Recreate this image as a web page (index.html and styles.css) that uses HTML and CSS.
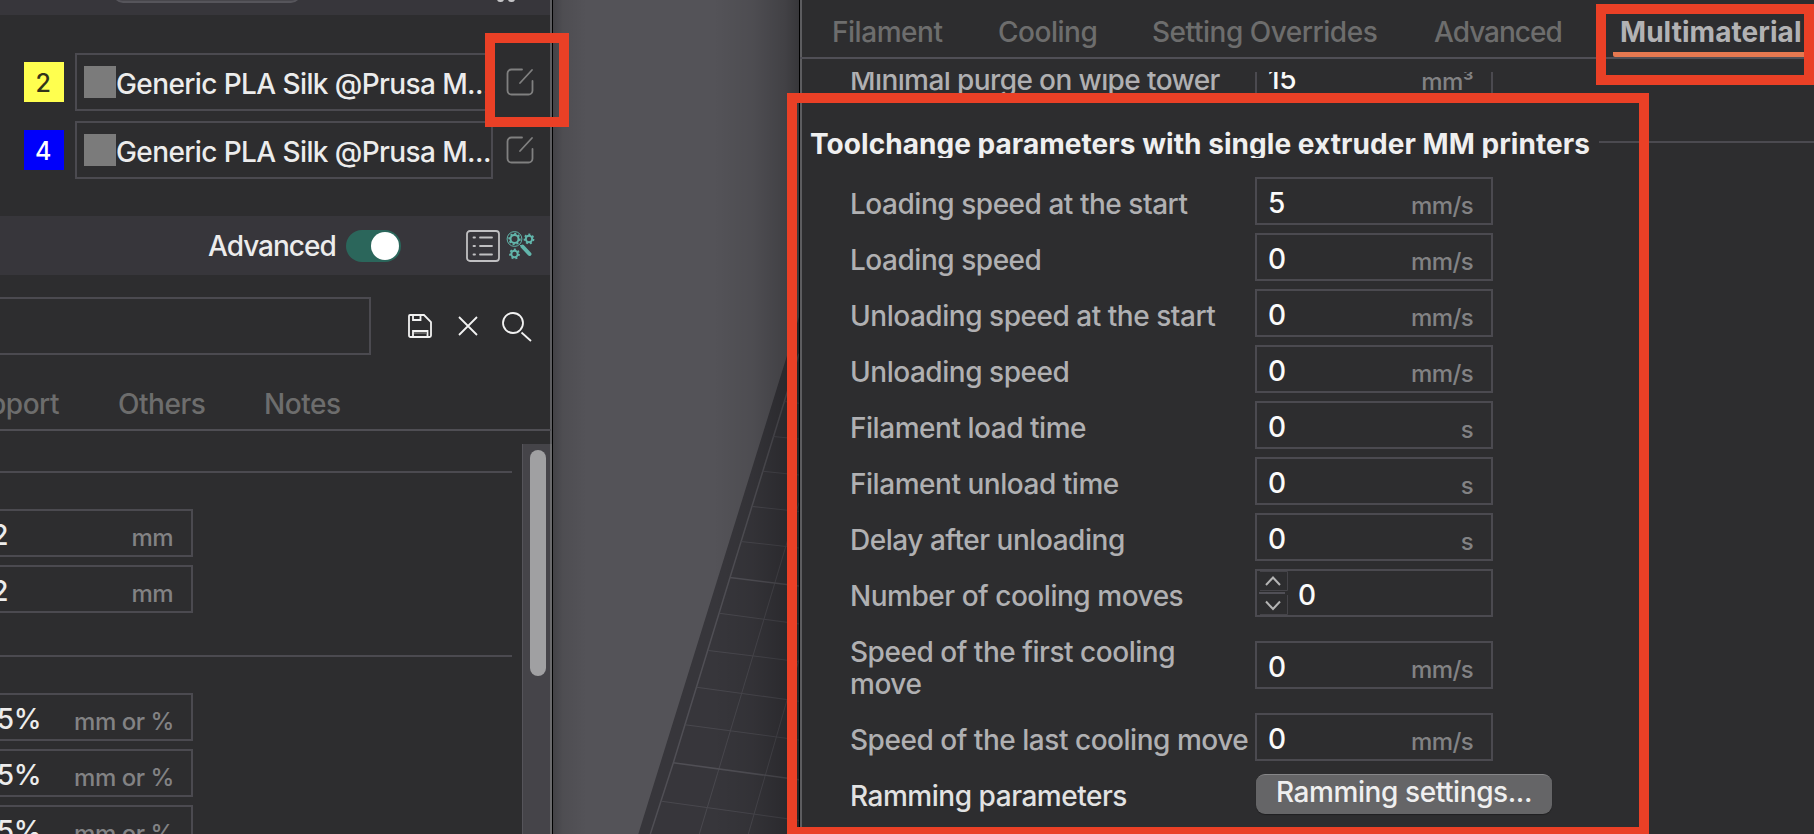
FILE: index.html
```
<!DOCTYPE html>
<html lang="en">
<head>
<meta charset="utf-8">
<title>Slicer settings</title>
<link rel="stylesheet" href="styles.css">
</head>
<body>
<div class="app">
  <aside class="side">
    <div class="side-top"><span class="pill"></span><span class="dots"><i></i><i></i></span></div>
    <div class="filaments">
      <div class="fil-row">
        <span class="badge badge-yellow">2</span>
        <div class="combo"><span class="swatch"></span><span class="combo-text">Generic PLA Silk @Prusa M...</span></div>
        <svg class="edit" viewBox="0 0 28 28"><path d="M16 1.500H5.500a4 4 0 0 0-4 4v17a4 4 0 0 0 4 4h17a4 4 0 0 0 4-4V13"/><path d="M14 15L26 2"/></svg>
      </div>
      <div class="fil-row">
        <span class="badge badge-blue">4</span>
        <div class="combo"><span class="swatch"></span><span class="combo-text">Generic PLA Silk @Prusa M...</span></div>
        <svg class="edit" viewBox="0 0 28 28"><path d="M16 1.500H5.500a4 4 0 0 0-4 4v17a4 4 0 0 0 4 4h17a4 4 0 0 0 4-4V13"/><path d="M14 15L26 2"/></svg>
      </div>
    </div>
    <div class="mode-bar">
      <span class="mode-label">Advanced</span>
      <span class="toggle"><i></i></span>
      <svg class="list-icon" viewBox="0 0 34 32"><rect x="1" y="1" width="32" height="30" rx="3"/><path d="M7.500 7.500h1.500M14 7.500h12M7.500 16h1.500M14 16h12M7.500 24.500h1.500M14 24.500h12"/></svg>
      <svg class="gear-icon" viewBox="0 0 29 30"><circle class="thin" cx="8.500" cy="8" r="7.400"/><circle cx="8.500" cy="8" r="4"/><circle class="teeth" cx="8.500" cy="8" r="5.300"/><circle cx="23" cy="8" r="3.200"/><circle class="teeth" cx="23" cy="8" r="4.500"/><circle cx="8.500" cy="23" r="3.200"/><circle class="teeth" cx="8.500" cy="23" r="4.500"/><path class="thin" d="M13.500 13.500l2.500 2.500"/><path class="handle" d="M16.500 15.500l7 7.500"/></svg>
    </div>
    <div class="preset-row">
      <div class="preset"></div>
      <svg class="save" viewBox="0 0 24 24"><path d="M2 1h14l7 7v13.500a1.500 1.500 0 0 1-1.500 1.500h-19A1.500 1.500 0 0 1 1 21.500V2a1 1 0 0 1 1-1z"/><path d="M5 1.500V6h7.500V1.500M5 22.500V17h14.500v5.500"/><path class="faint" d="M6 19h12.500"/></svg>
      <svg class="close" viewBox="0 0 20 20"><path d="M1 1l18 18M19 1L1 19"/></svg>
      <svg class="search" viewBox="0 0 30 30"><circle cx="11" cy="11" r="10"/><path d="M19.500 20.500L29 29"/></svg>
    </div>
    <nav class="side-tabs"><span class="t-support">pport</span><span class="t-others">Others</span><span class="t-notes">Notes</span></nav>
    <div class="side-body">
      <div class="side-form">
        <hr class="rule rule-a">
        <div class="stack stack-a">
          <div class="field cut"><span class="val">2</span><span class="unit">mm</span></div>
          <div class="field cut"><span class="val">2</span><span class="unit">mm</span></div>
        </div>
        <hr class="rule rule-b">
        <div class="stack stack-b">
          <div class="field cut pct"><span class="val">5%</span><span class="unit">mm or %</span></div>
          <div class="field cut pct"><span class="val">5%</span><span class="unit">mm or %</span></div>
          <div class="field cut pct"><span class="val">5%</span><span class="unit">mm or %</span></div>
        </div>
      </div>
      <div class="track"><div class="thumb"></div></div>
    </div>
  </aside>

  <div class="viewer">
    <svg class="bed" viewBox="39 0 738 1568" preserveAspectRatio="none">
      <path class="plate" d="M777 50L740 167L295 1568H777z"/>
      <path class="edge" d="M777 158L733 298L570 815L400 1359L331 1568"/>
      <path class="grid" d="M733 298L777 303M700 401L777 408M668 503L777 514M636 606L777 621M603 709L777 728M538 920L777 951M505 1029L777 1062M470 1137L777 1178M435 1247L777 1292M365 1472L777 1528"/>
      <path class="grid" d="M777 595L741 712L605 1155L478 1568M777 1056L741 1175L625 1568"/>
      <path class="edge" d="M570 815L777 840M400 1359L777 1409"/>
    </svg>
  </div>

  <main class="dialog">
    <nav class="tabs">
      <span class="tab-filament">Filament</span><span class="tab-cooling">Cooling</span><span class="tab-overrides">Setting Overrides</span><span class="tab-advanced">Advanced</span><span class="active">Multimaterial</span>
    </nav>
    <div class="page">
      <div class="row first"><label>Minimal purge on wipe tower</label><div class="field"><span class="val">15</span><span class="unit">mm³</span></div></div>
      <h2 class="group"><span>Toolchange parameters with single extruder MM printers</span></h2>
      <div class="rows">
        <div class="row"><label>Loading speed at the start</label><div class="field"><span class="val">5</span><span class="unit">mm/s</span></div></div>
        <div class="row"><label>Loading speed</label><div class="field"><span class="val">0</span><span class="unit">mm/s</span></div></div>
        <div class="row"><label>Unloading speed at the start</label><div class="field"><span class="val">0</span><span class="unit">mm/s</span></div></div>
        <div class="row"><label>Unloading speed</label><div class="field"><span class="val">0</span><span class="unit">mm/s</span></div></div>
        <div class="row"><label>Filament load time</label><div class="field"><span class="val">0</span><span class="unit">s</span></div></div>
        <div class="row"><label>Filament unload time</label><div class="field"><span class="val">0</span><span class="unit">s</span></div></div>
        <div class="row"><label>Delay after unloading</label><div class="field"><span class="val">0</span><span class="unit">s</span></div></div>
        <div class="row"><label>Number of cooling moves</label><div class="field spin">
          <svg class="spinner" viewBox="0 0 31 44"><path class="cell" d="M2 .5H29.500V19.500H2M29.500 24V43.500H2"/><path class="bar" d="M1 22H27"/><path class="chev" d="M8 14l7-7.500 7 7.500M8 30.500l7 7.500 7-7.500"/></svg>
          <span class="val">0</span></div></div>
        <div class="row tall"><label>Speed of the first cooling<br>move</label><div class="field"><span class="val">0</span><span class="unit">mm/s</span></div></div>
        <div class="row"><label>Speed of the last cooling move</label><div class="field"><span class="val">0</span><span class="unit">mm/s</span></div></div>
        <div class="row last"><label>Ramming parameters</label><button class="btn" type="button"><span>Ramming settings...</span></button></div>
      </div>
    </div>
  </main>

  <div class="mark mark-edit"></div>
  <div class="mark mark-tab"></div>
  <div class="mark mark-group"></div>
</div>
</body>
</html>
```
FILE: styles.css
```
* { box-sizing: border-box; }
body {
  margin: 0;
  background: #2d2d2f;
  font-family: Inter, "Liberation Sans", sans-serif;
  font-size: 28px;
  font-weight: 450;
  line-height: 32px;
  letter-spacing: -.47px;
  color: #ececec;
}
svg { display: block; fill: none; flex: none; overflow: visible; }
.app {
  position: relative;
  display: flex;
  width: 1814px;
  height: 834px;
  overflow: hidden;
  white-space: nowrap;
}

/* left panel */
.side {
  width: 553px;
  flex: none;
  display: flex;
  flex-direction: column;
  background: linear-gradient(#5d5d60, #5d5d60) 550px 0 / 2px 100% no-repeat, #2d2d2f;
  border-right: 1px solid #000;
}
.side-top { display: flex; height: 15px; width: 550px; background: #37363b; overflow: hidden; }
.pill { width: 188px; height: 24px; margin: -21px 0 0 113px; border: 2px solid #56555b; border-radius: 10px; background: #48474c; flex: none; }
.dots { display: flex; gap: 4px; margin: -4px 0 0 196px; }
.dots i { width: 7px; height: 6px; border-radius: 3px; background: #c4c4c6; }
.filaments { display: flex; flex-direction: column; gap: 10px; padding: 38px 0 37px 24px; height: 201px; }
.fil-row { display: flex; align-items: center; height: 58px; }
.badge { width: 40px; height: 40px; font-size: 25px; line-height: 42px; text-align: center; padding-right: 2px; margin-bottom: 1px; }
.badge-yellow { background: #ffff4f; color: #33331a; }
.badge-blue { background: #0000fb; color: #fff; font-weight: 550; }
.combo { display: flex; align-items: center; width: 418px; height: 58px; margin-left: 11px; padding-left: 7px; border: 2px solid #4b4a50; }
.swatch { width: 32px; height: 32px; flex: none; background: #7b7b7b; }
.combo-text { padding-top: 4px; letter-spacing: -.6px; }
.edit { width: 28px; height: 28px; margin-left: 13px; stroke: #808080; stroke-width: 1.800; stroke-linecap: round; }
.mode-bar { display: flex; align-items: center; height: 59px; width: 550px; padding-left: 208px; background: #37363b; }
.mode-label { width: 138px; letter-spacing: -1px; }
.toggle { display: flex; justify-content: flex-end; width: 55px; height: 32px; padding: 2px; border-radius: 16px; background: #2b665b; }
.toggle i { width: 28px; height: 28px; border-radius: 50%; background: #fff; }
.list-icon { width: 34px; height: 32px; margin-left: 65px; stroke: #c0c0c2; stroke-width: 1.800; stroke-linecap: round; }
.gear-icon { width: 29px; height: 30px; margin-left: 6px; stroke: #62b5ab; stroke-width: 2; }
.gear-icon .thin { stroke-width: 1; }
.gear-icon .teeth { stroke-width: 1.800; stroke-dasharray: 2 2; }
.gear-icon .handle { stroke-width: 4; stroke-linecap: round; }
.preset-row { display: flex; height: 102px; padding-top: 22px; }
.preset { width: 371px; height: 58px; border: 2px solid #4b4a50; border-left: 0; }
.preset-row svg { stroke: #f2f2f2; stroke-width: 1.800; }
.save { width: 24px; height: 24px; margin: 17px 0 0 37px; }
.preset-row .faint { stroke: #777; stroke-width: 1.500; }
.close { width: 20px; height: 20px; margin: 19px 0 0 26px; }
.search { width: 30px; height: 30px; margin: 15px 0 0 24px; }
.side-tabs { display: flex; align-items: center; width: 551px; height: 54px; padding-top: 2px; border-bottom: 2px solid #4f4e54; color: #6d6d6d; }
.t-support { display: flex; justify-content: flex-end; width: 59px; }
.t-others { margin-left: 59px; width: 146px; }
.side-body { display: flex; height: 403px; }
.side-form { width: 522px; }
.rule { margin: 0; width: 512px; height: 2px; border: 0; background: #4b4a50; }
.rule-a { margin-top: 40px; }
.stack { display: flex; flex-direction: column; gap: 8px; }
.stack-a { padding: 36px 0 42px; }
.stack-b { padding-top: 36px; }
.track { width: 30px; height: 390px; margin-top: 13px; padding: 6px 0 0 7px; background: #454449; border-left: 1px solid #55545a; border-right: 2px solid #6a6a6c; }
.thumb { width: 16px; height: 226px; border-radius: 8px; background: #a0a0a2; }

/* fields shared by both panels */
.field { display: flex; align-items: center; width: 238px; height: 48px; flex: none; padding: 3px 18px 0 11px; border: 2px solid #4b4a50; }
.val { flex: 1; color: #fafafa; }
.unit { font-size: 24px; letter-spacing: -.6px; padding-top: 6px; color: #828284; }
.field.cut { width: 193px; border-left: 0; padding-left: 0; }
.cut .val { display: flex; justify-content: flex-end; flex: none; width: 8px; color: #ececec; }
.cut .unit { margin-left: auto; }
.cut.pct .unit { margin-right: -1px; letter-spacing: -.45px; }
.cut.pct .val { width: 41px; }

/* 3D view */
.viewer {
  position: relative;
  display: flex;
  align-items: flex-end;
  width: 246px;
  flex: none;
  background: #545358;
}
.viewer::after {
  content: "";
  position: absolute;
  inset: 0;
  background: linear-gradient(90deg, rgba(0,0,0,.2) 0, rgba(0,0,0,.07) 10px, transparent 34px, transparent 160px, rgba(0,0,0,.08) 200px, rgba(0,0,0,.22) 232px, rgba(0,0,0,.34) 246px);
}
.bed { width: 246px; height: 534px; overflow: hidden; }
.plate { fill: #37363b; }
.edge { stroke: #504f55; stroke-width: 4.500; }
.grid { stroke: #49484e; stroke-width: 3; }

/* dialog */
.dialog { flex: 1; min-width: 0; border-left: 1px solid #000; background: linear-gradient(#5d5d60, #5d5d60) 0 0 / 2px 100% no-repeat, #2d2d2f; }
.tabs { display: flex; align-items: flex-start; height: 59px; padding: 16px 0 0 32px; border-bottom: 2px solid #504f56; color: #6d6d6d; }
.tabs span { flex: none; }
.tab-filament { width: 166px; }
.tab-cooling { width: 154px; }
.tab-overrides { width: 282px; }
.tab-advanced { width: 179px; letter-spacing: -1px; }
.tabs .active { height: 41px; padding-left: 7px; width: 240px; font-weight: 700; letter-spacing: .05px; color: #b2b2b4; border-bottom: 5px solid #e57850; border-radius: 2px; }
.page { margin-top: 13px; height: 762px; overflow: hidden; }
.row { display: flex; height: 56px; padding-left: 50px; }
.row label { width: 405px; padding-top: 11px; color: #b0b0b2; }
.row.first { height: 48px; margin-top: -19px; }
.first label { letter-spacing: -.6px; }
.group { display: flex; align-items: flex-start; margin: 29px 0 0; padding-left: 10px; height: 32px; font-size: 28px; font-weight: 700; letter-spacing: .05px; color: #efefef; }
.group span { height: 30px; line-height: 33px; overflow: hidden; margin-top: -2px; }
.group::after { content: ""; flex: 1; height: 2px; margin: 11px 0 0 9px; background: #4b4a50; }
.rows { padding-top: 15px; }
.row.tall { height: 88px; }
.row.tall .field { margin-top: 16px; }
.row.last label { color: #e2e2e2; }
.spin { padding-left: 0; }
.spinner { width: 31px; height: 44px; margin: -4px 9px 0 1px; }
.cell { stroke: #454449; stroke-width: 1; }
.bar { stroke: #504f56; stroke-width: 2; }
.chev { stroke: #b4b4b4; stroke-width: 2; }
.btn { width: 296px; height: 40px; margin: 5px 0 0 1px; padding: 0 0 5px; border: 0; border-top: 1px solid #868688; border-radius: 9px; background: #656567; color: #efefef; font: inherit; letter-spacing: -.42px; box-shadow: 0 1px 1px rgba(0,0,0,.3); }

/* annotation frames */
.mark { position: absolute; border: 10px solid #ea4026; }
.mark-edit { left: 485px; top: 33px; width: 84px; height: 94px; }
.mark-tab { left: 1596px; top: 4px; width: 218px; height: 81px; }
.mark-group { left: 787px; top: 93px; width: 862px; height: 744px; }
```
